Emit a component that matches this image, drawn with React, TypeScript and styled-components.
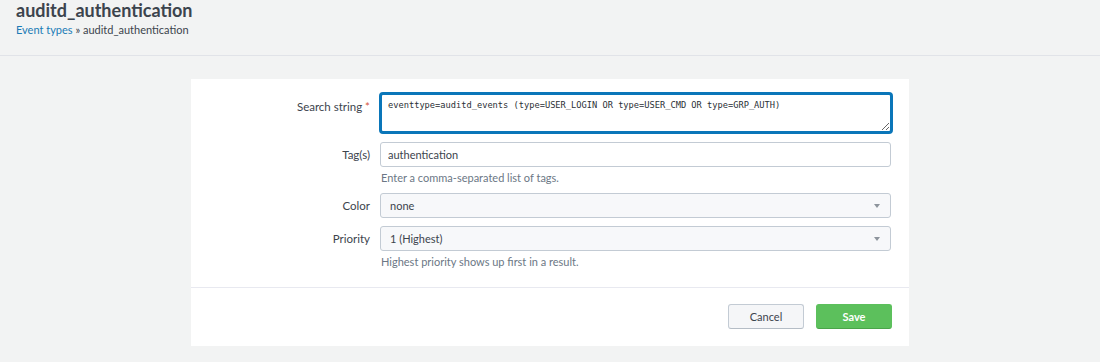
import React from 'react';
import styled, { createGlobalStyle } from 'styled-components';

const COLORS = {
  PAGE: '#f2f3f3',
  TEXT: '#3c444d',
  MUTED: '#6b7785',
  LINK: '#1a7bb6',
  BORDER: '#c3cbd4',
  FOCUS: '#0a76b9',
  GREEN: '#5cc05c',
};

const GlobalStyle = createGlobalStyle`
  html, body {
    margin: 0;
    background: ${COLORS.PAGE};
    font-family: Lato, "Open Sans", "Liberation Sans", sans-serif;
    color: ${COLORS.TEXT};
  }
`;

const Caret = () => (
  <svg width="6" height="4" viewBox="0 0 6 4">
    <path d="M0 0 L6 0 L3 4 Z" fill="#8d949c" />
  </svg>
);

const App = () => (
  <>
    <GlobalStyle />
    <Header>
      <PageTitle>auditd_authentication</PageTitle>
      <Breadcrumb>
        <Link>Event types</Link> » auditd_authentication
      </Breadcrumb>
    </Header>

    <Body>
      <Panel>
        <Form>
          <Row>
            <Label $offset={2}>Search string <Required>*</Required></Label>
            <Field>
              <SearchArea defaultValue="eventtype=auditd_events (type=USER_LOGIN OR type=USER_CMD OR type=GRP_AUTH)" />
            </Field>
          </Row>

          <Row>
            <Label>Tag(s)</Label>
            <Field>
              <TextInput defaultValue="authentication" />
              <Help>Enter a comma-separated list of tags.</Help>
            </Field>
          </Row>

          <Row>
            <Label>Color</Label>
            <Field>
              <Select>
                <span>none</span>
                <Caret />
              </Select>
            </Field>
          </Row>

          <Row>
            <Label>Priority</Label>
            <Field>
              <Select>
                <span>1 (Highest)</span>
                <Caret />
              </Select>
              <Help>Highest priority shows up first in a result.</Help>
            </Field>
          </Row>
        </Form>

        <Footer>
          <Button>Cancel</Button>
          <Button $primary>Save</Button>
        </Footer>
      </Panel>
    </Body>
  </>
);

const Header = styled.header`
  padding: 0 16px;
  height: 56px;
  border-bottom: 1px solid #e1e3e8;
  box-sizing: border-box;
`;

const PageTitle = styled.h1`
  margin: 0;
  font-size: 18px;
  line-height: 20px;
  font-weight: 700;
  color: #3c444d;
`;

const Breadcrumb = styled.div`
  margin-top: 3px;
  font-size: 11px;
  line-height: 14px;
  color: ${COLORS.TEXT};
`;

const Link = styled.a`
  color: ${COLORS.LINK};
  text-decoration: none;
  cursor: pointer;
`;

const Body = styled.main`
  padding: 23px 0 0 191px;
`;

const Panel = styled.section`
  width: 718px;
  background: #fff;
`;

const Form = styled.div`
  display: flex;
  flex-direction: column;
  gap: 8px;
  padding: 13px 17px 18px 0;
  border-bottom: 1px solid #e8e9f0;
`;

const Row = styled.div`
  display: grid;
  grid-template-columns: 179px 1fr;
  column-gap: 11px;
  align-items: start;
`;

const Label = styled.label<{ $offset?: number }>`
  text-align: right;
  font-size: 11.5px;
  line-height: 25px;
  color: ${COLORS.TEXT};
  padding-top: ${({ $offset }) => $offset ?? 0}px;
`;

const Required = styled.span`
  color: #d6563c;
`;

const Field = styled.div`
  display: flex;
  flex-direction: column;
  margin-left: -1px;
`;

const SearchArea = styled.textarea`
  box-sizing: border-box;
  width: 514px;
  height: 42px;
  margin-left: -1px;
  padding: 4px 6px;
  border: 3px solid ${COLORS.FOCUS};
  border-radius: 4px;
  font-family: "DejaVu Sans Mono", "Liberation Mono", monospace;
  font-size: 8.7px;
  line-height: 12px;
  color: #2b3036;
  resize: vertical;
  outline: none;
`;

const TextInput = styled.input`
  box-sizing: border-box;
  width: 511px;
  height: 25px;
  padding: 0 7px;
  border: 1px solid ${COLORS.BORDER};
  border-radius: 3px;
  font-family: inherit;
  font-size: 11px;
  color: ${COLORS.TEXT};
  outline: none;
`;

const Select = styled.div`
  box-sizing: border-box;
  width: 511px;
  height: 25px;
  padding: 0 10px 0 9px;
  display: flex;
  align-items: center;
  justify-content: space-between;
  border: 1px solid ${COLORS.BORDER};
  border-radius: 3px;
  background: #f7f8fa;
  font-size: 11px;
  color: ${COLORS.TEXT};
`;

const Help = styled.div`
  margin: 4px 0 0 1px;
  font-size: 11px;
  line-height: 14px;
  color: ${COLORS.MUTED};
`;

const Footer = styled.div`
  display: flex;
  justify-content: flex-end;
  gap: 12px;
  padding: 16px 17px 17px 0;
`;

const Button = styled.button<{ $primary?: boolean }>`
  box-sizing: border-box;
  width: 76px;
  height: 25px;
  border-radius: 3px;
  font-family: inherit;
  font-size: 11px;
  font-weight: ${({ $primary }) => ($primary ? 700 : 400)};
  cursor: pointer;
  color: ${({ $primary }) => ($primary ? '#fff' : COLORS.TEXT)};
  background: ${({ $primary }) => ($primary ? COLORS.GREEN : '#f5f6f8')};
  border: 1px solid ${({ $primary }) => ($primary ? COLORS.GREEN : COLORS.BORDER)};
  border-bottom-color: ${({ $primary }) => ($primary ? '#4aa44a' : '#b5bdc6')};
`;

export default App;
